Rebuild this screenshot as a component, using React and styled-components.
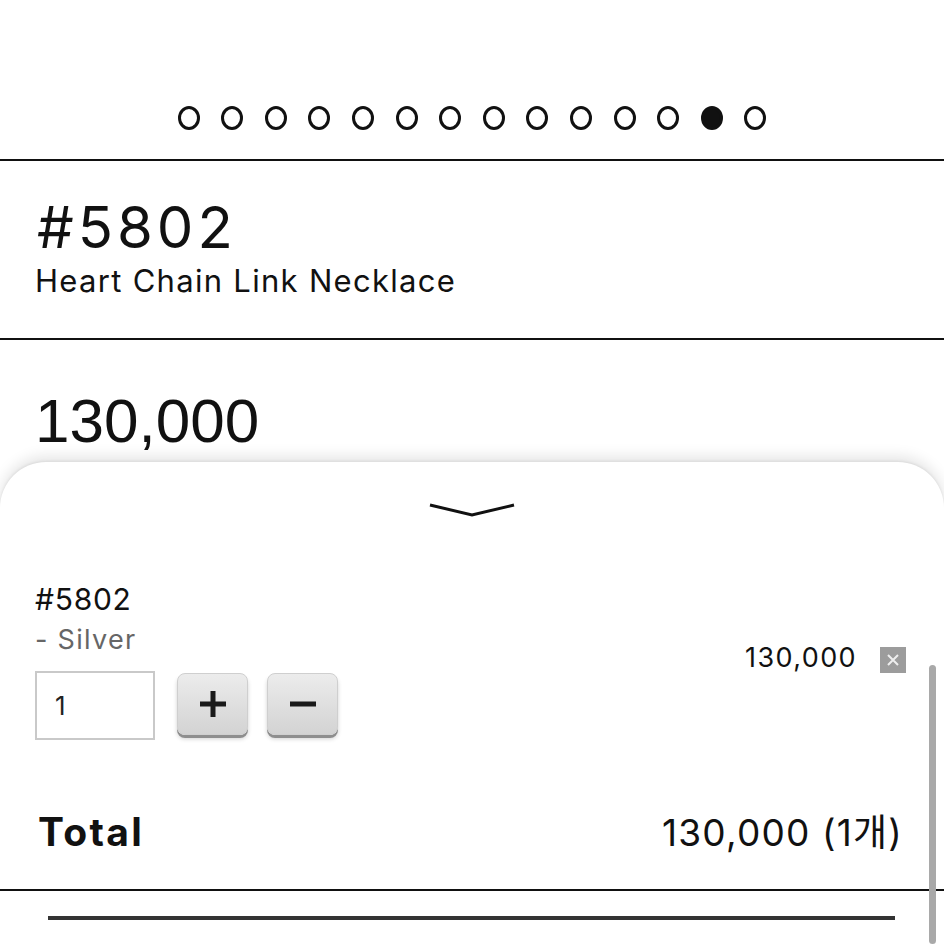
import React from "react";
import styled, { createGlobalStyle } from "styled-components";

const GlobalStyle = createGlobalStyle`
  html, body {
    margin: 0;
    padding: 0;
    background: #fff;
    overflow: hidden;
  }
  body {
    font-family: "Liberation Sans", Arial, sans-serif;
    color: #111;
  }
`;

const Page = styled.div`
  position: relative;
  width: 944px;
  height: 944px;
  overflow: hidden;
  background: #fff;
`;

const Pager = styled.div`
  display: flex;
  justify-content: center;
  gap: 21.6px;
  padding: 106px 0 29px;
`;

const Dot = styled.span`
  box-sizing: border-box;
  width: 22px;
  height: 24px;
  border-radius: 50%;
  border: 3px solid #111;
  background: ${p => (p.$active ? "#111" : "#fff")};
`;

const Rule = styled.div`
  height: 2px;
  background: #111;
`;

const TitleBlock = styled.div`
  padding: 37px 35px 42px;
`;

const Code = styled.div`
  font-family: Inter, "Liberation Sans", sans-serif;
  font-size: 58px;
  line-height: 58px;
  letter-spacing: 4px;
  margin-left: 2px;
`;

const Name = styled.div`
  font-family: Inter, "Liberation Sans", sans-serif;
  font-size: 31px;
  line-height: 31px;
  margin-top: 9px;
  letter-spacing: 1.3px;
`;

const Price = styled.div`
  padding: 50px 35px 0;
  font-size: 62px;
  line-height: 62px;
`;

const Sheet = styled.div`
  position: absolute;
  top: 462px;
  left: 0;
  right: 0;
  bottom: 0;
  background: #fff;
  border-radius: 46px 46px 0 0;
  box-shadow: 0 -6px 14px rgba(0, 0, 0, 0.1), 0 -1px 3px rgba(0, 0, 0, 0.08);
  font-family: Inter, "Noto Sans CJK KR", sans-serif;
`;

const Handle = styled.div`
  display: flex;
  justify-content: center;
  padding-top: 40px;
  height: 60px;
`;

const Item = styled.div`
  display: flex;
  justify-content: space-between;
  padding: 0 38px 0 35px;
  margin-top: 22px;
`;

const ItemInfo = styled.div`
  display: flex;
  flex-direction: column;
`;

const ItemCode = styled.div`
  font-size: 30px;
  line-height: 30px;
  letter-spacing: 0.7px;
`;

const ItemOption = styled.div`
  font-size: 27px;
  line-height: 27px;
  margin-top: 12px;
  color: #666;
  letter-spacing: 1.3px;
`;

const Controls = styled.div`
  display: flex;
  align-items: flex-start;
  margin-top: 18px;
`;

const QtyBox = styled.div`
  box-sizing: border-box;
  width: 120px;
  height: 69px;
  border: 2px solid #c9c9c9;
  display: flex;
  align-items: center;
  padding-left: 18px;
  font-size: 26px;
  color: #222;
`;

const StepButton = styled.div`
  box-sizing: border-box;
  width: 71px;
  height: 62px;
  margin-top: 2px;
  margin-left: ${p => p.$gap}px;
  border-radius: 8px;
  border: 1px solid #cfcfcf;
  background: linear-gradient(#ececec, #d3d3d3);
  box-shadow: 0 3px 0 #8e8e8e, 0 4px 4px rgba(0, 0, 0, 0.18);
  display: flex;
  align-items: center;
  justify-content: center;
`;

const ItemSide = styled.div`
  display: flex;
  align-items: flex-start;
  gap: 23px;
  padding-top: 60px;
`;

const ItemPrice = styled.div`
  font-size: 27px;
  line-height: 27px;
  letter-spacing: 1.4px;
`;

const RemoveBox = styled.div`
  width: 26px;
  height: 26px;
  margin-top: 3px;
  background: #9c9c9c;
  display: flex;
  align-items: center;
  justify-content: center;
`;

const TotalRow = styled.div`
  display: flex;
  justify-content: space-between;
  align-items: baseline;
  padding: 0 41px 0 38px;
  margin-top: 72px;
`;

const TotalLabel = styled.div`
  font-weight: 700;
  font-size: 39px;
  line-height: 39px;
  letter-spacing: 2.3px;
`;

const TotalValue = styled.div`
  font-size: 37px;
  line-height: 39px;
  letter-spacing: 1.2px;
`;

const SheetRule = styled.div`
  height: 2px;
  background: #111;
  margin-top: 37px;
`;

const ActionBar = styled.div`
  height: 4px;
  background: #333;
  margin: 25px 49px 0 48px;
`;

const Scrollbar = styled.div`
  position: absolute;
  top: 203px;
  bottom: 0;
  left: 929px;
  width: 7px;
  border-radius: 4px;
  background: #a9a9a9;
`;

export default function App() {
  const dots = Array.from({ length: 14 }, (_, i) => i);
  return (
    <Page>
      <GlobalStyle />
      <Pager>
        {dots.map(i => (
          <Dot key={i} $active={i === 12} />
        ))}
      </Pager>
      <Rule />
      <TitleBlock>
        <Code>#5802</Code>
        <Name>Heart Chain Link Necklace</Name>
      </TitleBlock>
      <Rule />
      <Price>130,000</Price>

      <Sheet>
        <Handle>
          <svg width="86" height="16" viewBox="0 0 86 16">
            <polyline points="1,3 43,13 85,3" fill="none" stroke="#111" strokeWidth="3" />
          </svg>
        </Handle>
        <Item>
          <ItemInfo>
            <ItemCode>#5802</ItemCode>
            <ItemOption>- Silver</ItemOption>
            <Controls>
              <QtyBox>1</QtyBox>
              <StepButton $gap={22}>
                <svg width="26" height="26" viewBox="0 0 26 26">
                  <rect x="10.5" y="0" width="5" height="26" fill="#1a1a1a" />
                  <rect x="0" y="10.5" width="26" height="5" fill="#1a1a1a" />
                </svg>
              </StepButton>
              <StepButton $gap={19}>
                <svg width="26" height="6" viewBox="0 0 26 6">
                  <rect x="0" y="0.5" width="26" height="5" fill="#1a1a1a" />
                </svg>
              </StepButton>
            </Controls>
          </ItemInfo>
          <ItemSide>
            <ItemPrice>130,000</ItemPrice>
            <RemoveBox>
              <svg width="12" height="12" viewBox="0 0 12 12">
                <path d="M1 1 L11 11 M11 1 L1 11" stroke="#eee" strokeWidth="2" />
              </svg>
            </RemoveBox>
          </ItemSide>
        </Item>
        <TotalRow>
          <TotalLabel>Total</TotalLabel>
          <TotalValue>130,000 (1개)</TotalValue>
        </TotalRow>
        <SheetRule />
        <ActionBar />
        <Scrollbar />
      </Sheet>
    </Page>
  );
}
